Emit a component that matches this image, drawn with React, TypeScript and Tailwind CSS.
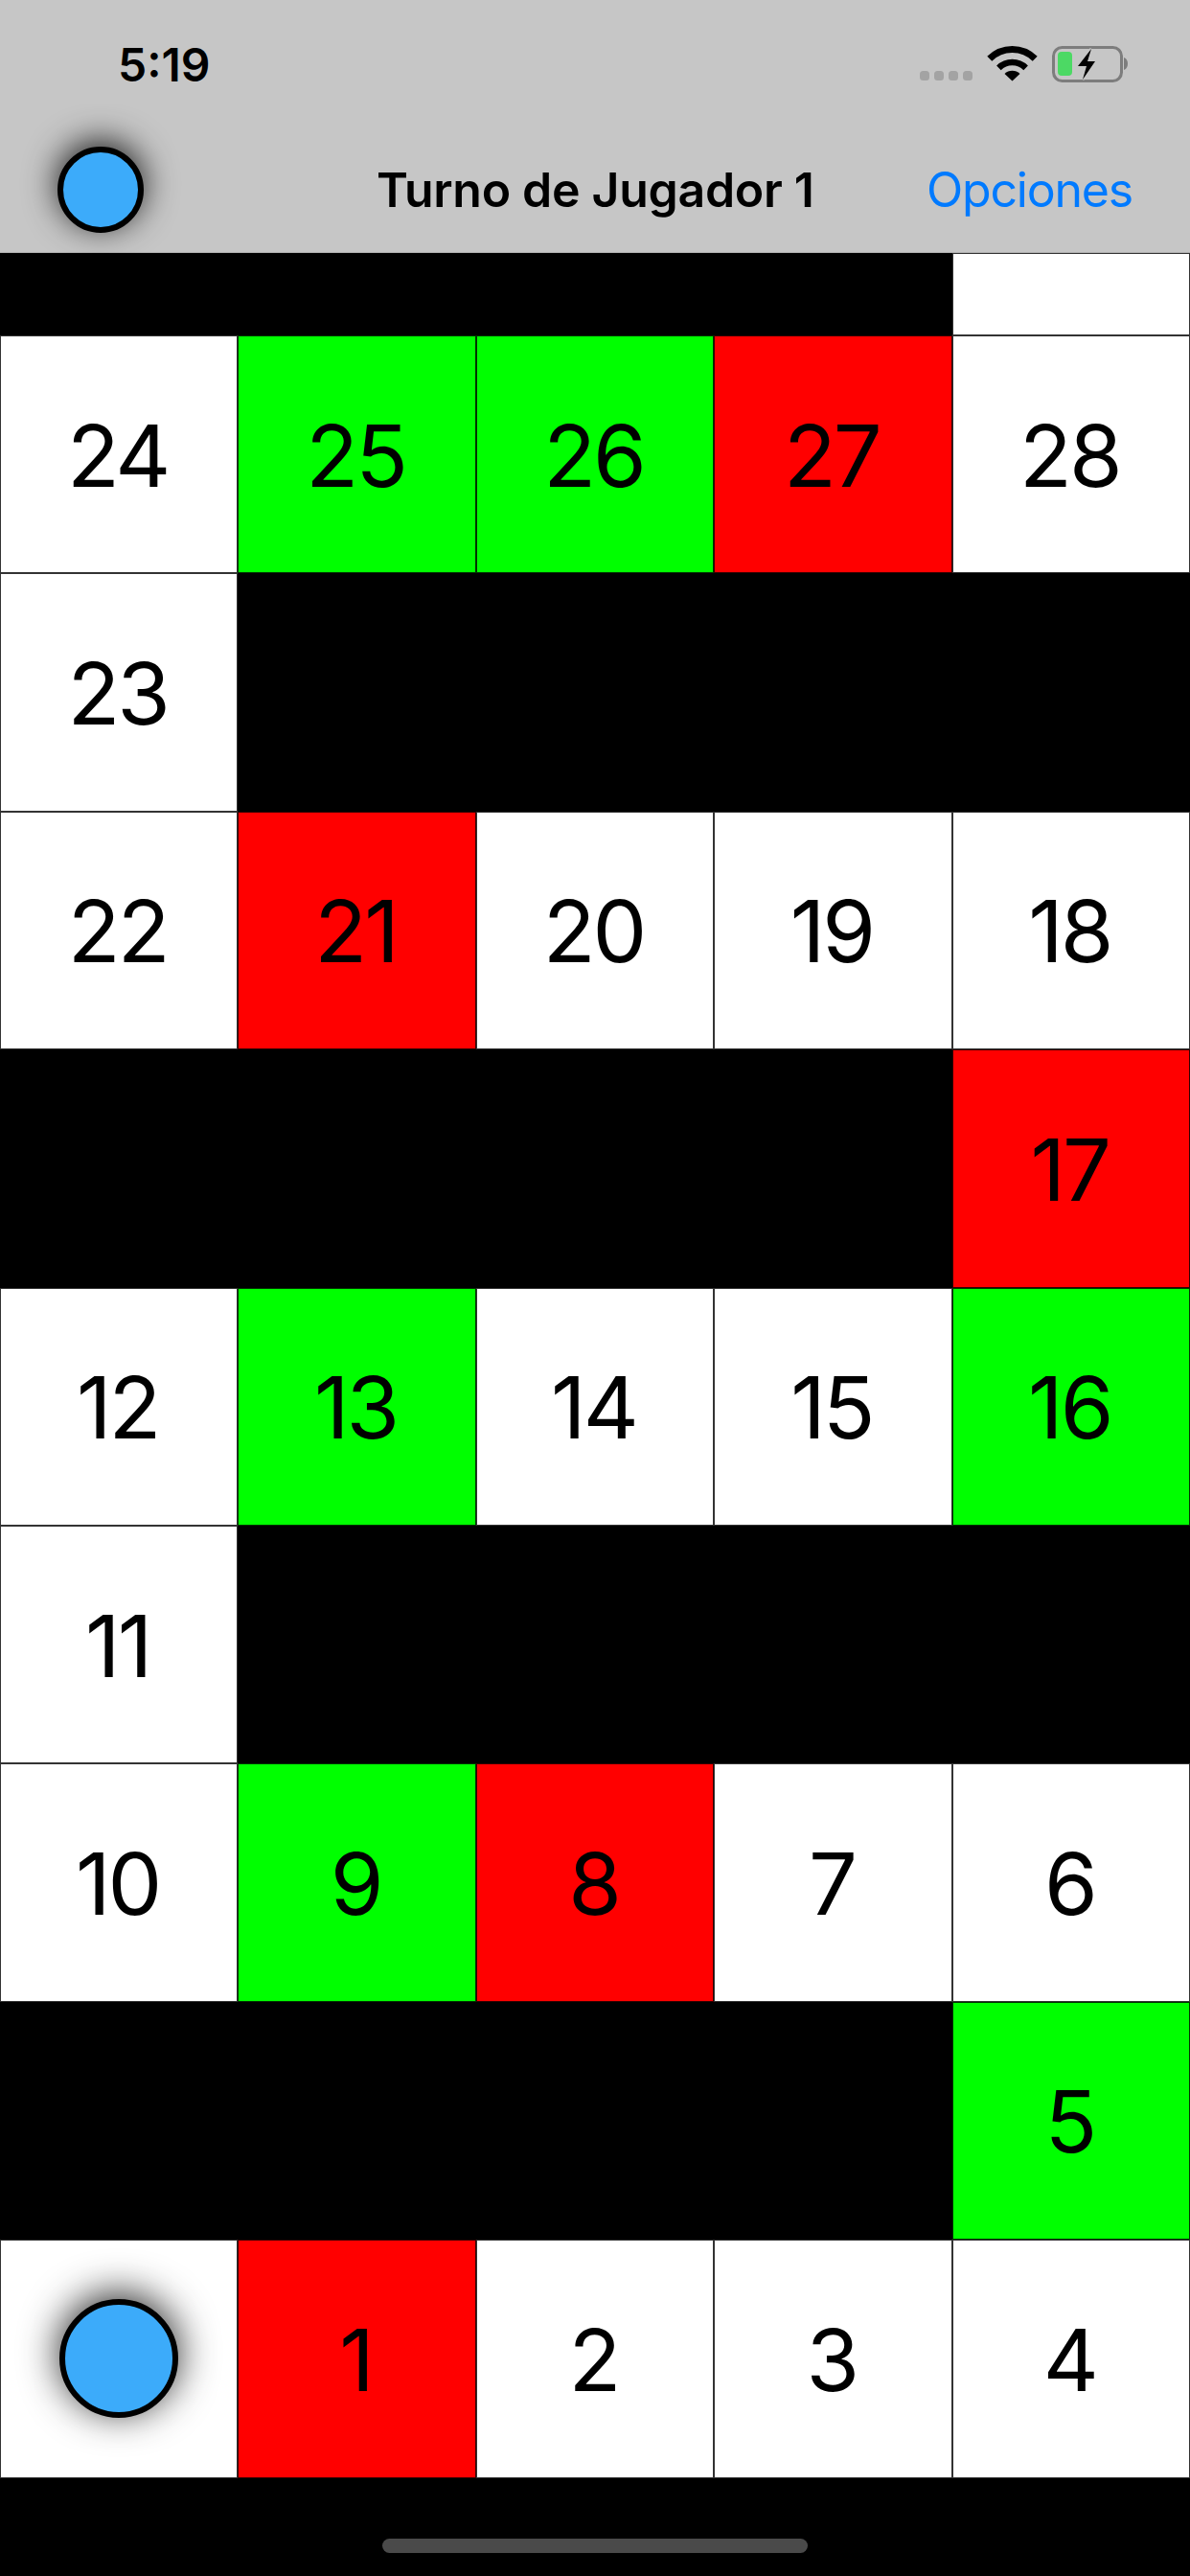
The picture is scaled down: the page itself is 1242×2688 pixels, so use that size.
const G = 'bg-[#00ff00]';
const R = 'bg-[#ff0000]';
const W = 'bg-white';
const rows: ([string, string] | null)[][] = [
  [null, null, null, null, ['', W]],
  [['24', W], ['25', G], ['26', G], ['27', R], ['28', W]],
  [['23', W], null, null, null, null],
  [['22', W], ['21', R], ['20', W], ['19', W], ['18', W]],
  [null, null, null, null, ['17', R]],
  [['12', W], ['13', G], ['14', W], ['15', W], ['16', G]],
  [['11', W], null, null, null, null],
  [['10', W], ['9', G], ['8', R], ['7', W], ['6', W]],
  [null, null, null, null, ['5', G]],
  [['@', W], ['1', R], ['2', W], ['3', W], ['4', W]],
];

function StatusIcons() {
  const cx = 1056.5;
  return (
    <svg width="230" height="50" viewBox="958 42 230 50" fill="none">
      {[960, 975, 990, 1005].map((x) => (
        <rect key={x} x={x} y="75" width="10" height="10" rx="3.5" fill="#a3a3a3" />
      ))}
      <path d={`M${cx - 23.7} 62.3A33.5 33.5 0 0 1 ${cx + 23.7} 62.3`} stroke="#000" strokeWidth="7" />
      <path d={`M${cx - 14.1} 71.9A20 20 0 0 1 ${cx + 14.1} 71.9`} stroke="#000" strokeWidth="6.5" />
      <path d={`M${cx} 85.5L${cx - 8} 78A11.5 11.5 0 0 1 ${cx + 8} 78Z`} fill="#000" />
      <rect x="1099.5" y="50.5" width="71" height="35" rx="9" stroke="#7d7d7d" strokeWidth="3" />
      <path d="M1173 61C1176 62 1177 65 1177 67.5S1176 73 1173 74Z" fill="#7d7d7d" />
      <rect x="1104" y="55" width="15" height="25" rx="4" fill="#4cd964" />
      <path
        d="M1139 52L1125 70L1134 70L1130 84L1143 65L1135 65Z"
        fill="#000"
        stroke="#c6c6c6"
        strokeWidth="3"
        paintOrder="stroke"
      />
    </svg>
  );
}

export default function App() {
  return (
    <div className="flex h-[2688px] w-[1242px] flex-col overflow-hidden bg-black font-['Inter',sans-serif] text-black">
      <header className="h-[264px] shrink-0 border-b border-[#b0b0b0] bg-[#c6c6c6]">
        <div className="flex h-[132px] items-center justify-between pl-[123px] pr-[54px]">
          <span className="mt-1 text-[48px] font-semibold leading-none">5:19</span>
          <StatusIcons />
        </div>
        <div className="flex h-[131px] items-center pl-[60px] pr-[60px]">
          <div className="h-[90px] w-[90px] rounded-full border-[6px] border-black bg-[#3cabfa] shadow-[0_-6px_34px_rgba(0,0,0,0.85)]" />
          <span className="ml-[243px] text-[50px] font-semibold leading-none tracking-[-0.3px]">Turno de Jugador 1</span>
          <span className="ml-auto text-[50px] leading-none tracking-[-1.2px] text-[#007aff]">Opciones</span>
        </div>
      </header>
      <main className="grid shrink-0 grid-cols-5 grid-rows-[86px_repeat(9,248.4px)]">
        {rows.flat().map((cell, i) =>
          cell ? (
            <div
              key={i}
              className={`flex items-center justify-center border border-black/80 text-[90px] leading-none tracking-[-3px] ${cell[1]}`}
            >
              {cell[0] === '@' ? (
                <div className="h-[124px] w-[124px] rounded-full border-[6px] border-black bg-[#3cabfa] shadow-[0_-6px_40px_rgba(0,0,0,0.85)]" />
              ) : (
                <span className="pr-[3px] pt-[3px]">{cell[0]}</span>
              )}
            </div>
          ) : (
            <div key={i} className="bg-black" />
          ),
        )}
      </main>
      <div className="flex flex-1 items-end justify-center pb-[24px]">
        <div className="h-[15px] w-[444px] rounded-full bg-[#4a4a4a]" />
      </div>
    </div>
  );
}
